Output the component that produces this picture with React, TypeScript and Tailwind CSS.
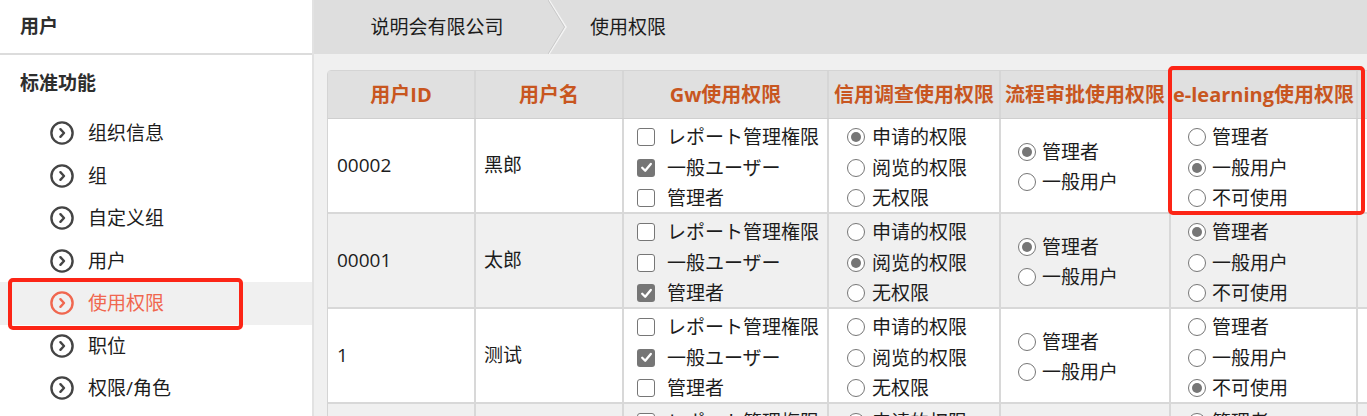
import React from "react";

function MenuIcon({ active }: { active?: boolean }) {
  const c = active ? "#f0674f" : "#444444";
  return (
    <svg width="24" height="24" viewBox="0 0 24 24" className="shrink-0">
      <circle cx="12" cy="12" r="10.6" fill="none" stroke={c} strokeWidth="2.4" />
      <path d="M10.4 8.2 L14 12 L10.4 15.8" fill="none" stroke={c} strokeWidth="2.4" strokeLinecap="round" strokeLinejoin="round" />
    </svg>
  );
}

function Check({ checked }: { checked: boolean }) {
  return checked ? (
    <span className="w-[18px] h-[18px] shrink-0 rounded-[3px] bg-[#767676] flex items-center justify-center">
      <svg width="13" height="13" viewBox="0 0 13 13">
        <path d="M2.2 6.8 L5.2 9.8 L10.8 3" stroke="white" strokeWidth="2.3" fill="none" strokeLinecap="round" strokeLinejoin="round" />
      </svg>
    </span>
  ) : (
    <span className="w-[18px] h-[18px] shrink-0 rounded-[3px] border-[1.5px] border-[#767676] bg-white" />
  );
}

function Radio({ checked }: { checked: boolean }) {
  return (
    <span className="w-[18px] h-[18px] shrink-0 rounded-full border-[1.5px] border-[#767676] bg-white flex items-center justify-center">
      {checked && <span className="w-[10px] h-[10px] rounded-full bg-[#767676]" />}
    </span>
  );
}

const menu = ["组织信息", "组", "自定义组", "用户", "使用权限", "职位", "权限/角色"];

const gwLabels = ["レポート管理権限", "一般ユーザー", "管理者"];
const creditLabels = ["申请的权限", "阅览的权限", "无权限"];
const flowLabels = ["管理者", "一般用户"];
const elLabels = ["管理者", "一般用户", "不可使用"];

const rows = [
  { id: "00002", name: "黑郎", gw: [false, true, false], credit: 0, flow: 0, el: 1 },
  { id: "00001", name: "太郎", gw: [false, false, true], credit: 1, flow: 0, el: 0 },
  { id: "1", name: "测试", gw: [false, true, false], credit: -1, flow: -1, el: 2 },
  { id: "", name: "", gw: [false, false, false], credit: 0, flow: -1, el: -1 },
];

export default function App() {
  return (
    <div className="w-[1367px] h-[416px] overflow-hidden flex bg-white text-[#1c1c1c] font-['Open_Sans','Noto_Sans_CJK_SC',sans-serif] relative">
      {/* Sidebar */}
      <aside className="w-[314px] shrink-0 border-r-2 border-[#e2e2e2] bg-white">
        <div className="h-[55px] border-b-2 border-[#dcdcdc] flex items-center pl-[20px] text-[19px] font-bold text-[#2e2e2e]">用户</div>
        <div className="h-[57px] flex items-center pl-[20px] text-[19px] font-bold text-[#2e2e2e]">标准功能</div>
        <ul>
          {menu.map((m) => {
            const active = m === "使用权限";
            return (
              <li
                key={m}
                className={
                  active
                    ? "h-[42.5px] flex items-center pl-[50px] gap-[14px] bg-[#f0f0f0] text-[#f0674f] text-[19px]"
                    : "h-[42.5px] flex items-center pl-[50px] gap-[14px] text-[#1c1c1c] text-[19px]"
                }
              >
                <MenuIcon active={active} />
                <span>{m}</span>
              </li>
            );
          })}
        </ul>
      </aside>

      {/* Main */}
      <main className="flex-1 bg-[#f0f0f0] overflow-hidden">
        <div className="h-[54px] bg-[#dedede] flex items-stretch text-[19px] text-[#1c1c1c]">
          <div className="w-[234px] pl-[12px] flex items-center justify-center">说明会有限公司</div>
          <svg width="20" height="54" viewBox="0 0 20 54" className="shrink-0">
            <polyline points="1,0 18,27 1,54" fill="none" stroke="#f4f4f4" strokeWidth="1.5" />
            <polyline points="0,0 16.5,27 0,54" fill="none" stroke="#c9c9c9" strokeWidth="1" />
          </svg>
          <div className="pl-[22px] flex items-center">使用权限</div>
        </div>

        <div className="ml-[13px] mt-[16px] w-[1200px] border border-[#d4d4d4] rounded-tl-[4px] bg-white">
          {/* header */}
          <div className="flex h-[48px] bg-[#e0e0e0] border-b border-[#cfcfcf] text-[20px] font-bold text-[#c8561f]">
            <div className="w-[148px] shrink-0 border-r-2 border-[#d6d6d6] flex items-center justify-center whitespace-nowrap">用户ID</div>
            <div className="w-[148px] shrink-0 border-r-2 border-[#d6d6d6] flex items-center justify-center whitespace-nowrap">用户名</div>
            <div className="w-[205px] shrink-0 border-r-2 border-[#d6d6d6] flex items-center justify-center whitespace-nowrap">Gw使用权限</div>
            <div className="w-[172px] shrink-0 border-r-2 border-[#d6d6d6] flex items-center justify-center whitespace-nowrap">信用调查使用权限</div>
            <div className="w-[170px] shrink-0 border-r-2 border-[#d6d6d6] flex items-center justify-center whitespace-nowrap">流程审批使用权限</div>
            <div className="w-[187px] shrink-0 border-r-2 border-[#d6d6d6] flex items-center justify-center whitespace-nowrap">e-learning使用权限</div>
            <div className="flex-1" />
          </div>
          {/* rows */}
          {rows.map((r, i) => (
            <div
              key={i}
              className={
                i % 2 === 1
                  ? "flex h-[95px] bg-[#f0f0f0] border-b-2 border-[#d8d8d8] text-[19px]"
                  : "flex h-[95px] bg-white border-b-2 border-[#d8d8d8] text-[19px]"
              }
            >
              <div className="w-[148px] shrink-0 border-r-2 border-[#d8d8d8] flex items-center pl-[9px]">{r.id}</div>
              <div className="w-[148px] shrink-0 border-r-2 border-[#d8d8d8] flex items-center pl-[8px]">{r.name}</div>
              <div className="w-[205px] shrink-0 border-r-2 border-[#d8d8d8] pt-[3px] pl-[13px]">
                {gwLabels.map((l, k) => (
                  <div key={l} className="h-[30.5px] flex items-center gap-[12px] whitespace-nowrap">
                    <Check checked={r.gw[k]} />
                    <span>{l}</span>
                  </div>
                ))}
              </div>
              <div className="w-[172px] shrink-0 border-r-2 border-[#d8d8d8] pt-[3px] pl-[18px]">
                {creditLabels.map((l, k) => (
                  <div key={l} className="h-[30.5px] flex items-center gap-[7px] whitespace-nowrap">
                    <Radio checked={r.credit === k} />
                    <span>{l}</span>
                  </div>
                ))}
              </div>
              <div className="w-[170px] shrink-0 border-r-2 border-[#d8d8d8] pl-[17px] flex flex-col justify-center pt-[3px]">
                {flowLabels.map((l, k) => (
                  <div key={l} className="h-[30.5px] flex items-center gap-[6px] whitespace-nowrap">
                    <Radio checked={r.flow === k} />
                    <span>{l}</span>
                  </div>
                ))}
              </div>
              <div className="w-[187px] shrink-0 border-r-2 border-[#d8d8d8] pt-[3px] pl-[17px]">
                {elLabels.map((l, k) => (
                  <div key={l} className="h-[30.5px] flex items-center gap-[6px] whitespace-nowrap">
                    <Radio checked={r.el === k} />
                    <span>{l}</span>
                  </div>
                ))}
              </div>
              <div className="flex-1" />
            </div>
          ))}
        </div>
      </main>

      {/* annotation boxes */}
      <div className="absolute left-[8px] top-[278px] w-[235px] h-[52px] border-4 border-[#fc2516] rounded-[5px]" />
      <div className="absolute left-[1168px] top-[66px] w-[197px] h-[149px] border-4 border-[#fc2516] rounded-[5px]" />
    </div>
  );
}
